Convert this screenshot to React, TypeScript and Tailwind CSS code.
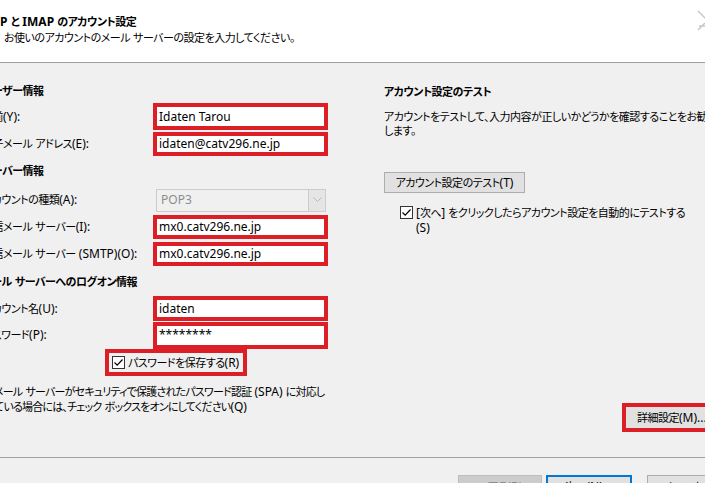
import type { ReactNode } from 'react'

// Japanese runs are set a touch smaller and tighter than Latin runs, like the Windows UI font
function T({ text, tight }: { text: string; tight?: boolean }) {
  const parts = text.split(/([\x20-\x7E]+)/).filter(Boolean)
  return (
    <>
      {parts.map((s, i) =>
        /^[\x20-\x7E]+$/.test(s) ? (
          <span key={i} className="text-[12px] tracking-normal">
            {s}
          </span>
        ) : (
          <span key={i} className={tight ? 'text-[11px] tracking-[-0.8px]' : 'text-[11px] tracking-[-0.5px]'}>
            {s}
          </span>
        ),
      )}
    </>
  )
}

// red-outlined text box as used in the account form
function Field({ value, className }: { value: string; className: string }) {
  return (
    <div className={`w-[175px] border-4 border-[#dc1f26] bg-white flex items-center pl-[2px] text-[12px] ${className}`}>
      {value}
    </div>
  )
}

function Check() {
  return (
    <span className="w-[13px] h-[13px] shrink-0 border border-[#333] bg-white flex items-center justify-center">
      <svg width="11" height="11" viewBox="0 0 11 11">
        <path d="M1.5 5.5 L4.2 8.2 L9.5 2.5" fill="none" stroke="#000" strokeWidth="1.2" />
      </svg>
    </span>
  )
}

function Row({ label, children, className }: { label: string; children: ReactNode; className: string }) {
  return (
    <div className={`flex items-center ${className}`}>
      <span className="w-[171px] shrink-0 whitespace-nowrap">
        <T text={label} />
      </span>
      {children}
    </div>
  )
}

function Heading({ text, className }: { text: string; className: string }) {
  return (
    <div className={`flex items-center font-bold whitespace-nowrap ${className}`}>
      <span>
        <T text={text} />
      </span>
    </div>
  )
}

export default function App() {
  return (
    <div className="w-[705px] h-[483px] overflow-hidden bg-[#f0f0f0] text-black text-[12px] font-['Noto_Sans','Noto_Sans_CJK_JP',sans-serif] [font-feature-settings:'palt'] flex flex-col">
      {/* Header */}
      <div className="h-[63px] shrink-0 bg-white border-b border-[#a0a0a0] flex justify-between">
        <div className="pt-[14px] whitespace-nowrap">
          <div className="-ml-[17px] font-bold leading-[16px]">
            <T text="POP と IMAP のアカウント設定" />
          </div>
          <div className="ml-[4px] leading-[15px]">
            <T text="お使いのアカウントのメール サーバーの設定を入力してください。" />
          </div>
        </div>
        <div className="w-[8px] overflow-hidden pt-[10px]">
          <svg width="20" height="24" viewBox="0 0 20 24">
            <path d="M1 1 L9 9 M1 20 L8 13 M2 16 L9 16" fill="none" stroke="#c8c8c8" strokeWidth="1.5" />
          </svg>
        </div>
      </div>

      {/* Body */}
      <div className="h-[394px] shrink-0 flex">
        <div className="-ml-[18px] w-[367px] shrink-0 pt-[19px] flex flex-col">
          <Heading text="ユーザー情報" className="h-[18px]" />
          <Row label="名前(Y):" className="h-[33px]">
            <Field value="Idaten Tarou" className="h-[27px]" />
          </Row>
          <Row label="電子メール アドレス(E):" className="h-[22px]">
            <Field value="idaten@catv296.ne.jp" className="h-[24px]" />
          </Row>
          <Heading text="サーバー情報" className="h-[32px]" />
          <Row label="アカウントの種類(A):" className="h-[26px]">
            <div className="ml-[3px] w-[170px] h-[23px] border border-[#cccccc] bg-[#f0f0f0] flex items-center">
              <span className="flex-1 pl-[4px] text-[#8d8d8d]">POP3</span>
              <span className="w-[17px] h-full border-l border-[#cccccc] bg-[#e5e5e5] flex items-center justify-center">
                <svg width="9" height="6" viewBox="0 0 9 6">
                  <path d="M0.5 0.5 L4.5 4.5 L8.5 0.5" fill="none" stroke="#b8b8b8" strokeWidth="1" />
                </svg>
              </span>
            </div>
          </Row>
          <Row label="受信メール サーバー(I):" className="h-[28px]">
            <Field value="mx0.catv296.ne.jp" className="h-[24px]" />
          </Row>
          <Row label="送信メール サーバー (SMTP)(O):" className="h-[26px]">
            <Field value="mx0.catv296.ne.jp" className="h-[24px]" />
          </Row>
          <Heading text="メール サーバーへのログオン情報" className="h-[29px]" />
          <Row label="アカウント名(U):" className="h-[25px]">
            <Field value="idaten" className="h-[25px]" />
          </Row>
          <Row label="パスワード(P):" className="h-[28px]">
            <Field value="********" className="h-[27px]" />
          </Row>
          <div className="h-[27px] flex">
            <div className="ml-[123px] border-4 border-[#dc1f26] flex items-center gap-[3px] pl-[3px] pr-[4px] whitespace-nowrap">
              <Check />
              <span>
                <T text="パスワードを保存する(R)" />
              </span>
            </div>
          </div>
          <div className="mt-[8px] ml-[12px] leading-[15px] whitespace-nowrap">
            <div>
              <T text="メール サーバーがセキュリティで保護されたパスワード認証 (SPA) に対応し" tight />
            </div>
            <div>
              <T text="ている場合には、チェック ボックスをオンにしてください(Q)" tight />
            </div>
          </div>
        </div>

        <div className="ml-[35px] flex-1 pt-[21px] flex flex-col whitespace-nowrap">
          <div className="h-[16px] flex items-center font-bold">
            <span>
              <T text="アカウント設定のテスト" />
            </span>
          </div>
          <div className="mt-[10px] leading-[14px]">
            <div>
              <T text="アカウントをテストして、入力内容が正しいかどうかを確認することをお勧め" />
            </div>
            <div>
              <T text="します。" />
            </div>
          </div>
          <div className="mt-[34px] flex">
            <div className="w-[141px] h-[21px] border border-[#adadad] bg-[#e1e1e1] flex items-center justify-center">
              <span>
                <T text="アカウント設定のテスト(T)" />
              </span>
            </div>
          </div>
          <div className="mt-[12px] ml-[16px] flex gap-[3px] leading-[15px]">
            <span className="pt-[1px]">
              <Check />
            </span>
            <div>
              <div>
                <T text="[次へ] をクリックしたらアカウント設定を自動的にテストする" />
              </div>
              <div>(S)</div>
            </div>
          </div>
          <div className="mt-auto pb-[25px] ml-[238px] flex">
            <div className="h-[29px] w-[100px] shrink-0 border-4 border-[#dc1f26] bg-[#e1e1e1] flex items-center pl-[11px]">
              <span>
                <T text="詳細設定(M)..." />
              </span>
            </div>
          </div>
        </div>
      </div>

      {/* Footer */}
      <div className="flex-1 border-t border-[#a0a0a0] pt-[17px] pl-[458px] flex whitespace-nowrap">
        <div className="w-[84px] h-[23px] shrink-0 border border-[#bfbfbf] bg-[#cccccc] text-[#838383] flex items-center justify-center">
          <span>
            <T text="< 戻る(B)" />
          </span>
        </div>
        <div className="ml-[4px] w-[86px] h-[23px] shrink-0 border-2 border-[#0078d7] bg-[#e1e1e1] flex items-center justify-center">
          <span>
            <T text="次へ(N) >" />
          </span>
        </div>
        <div className="ml-[15px] w-[86px] h-[23px] shrink-0 border border-[#adadad] bg-[#e1e1e1] flex items-center justify-center">
          <span>
            <T text="キャンセル" />
          </span>
        </div>
      </div>
    </div>
  )
}
